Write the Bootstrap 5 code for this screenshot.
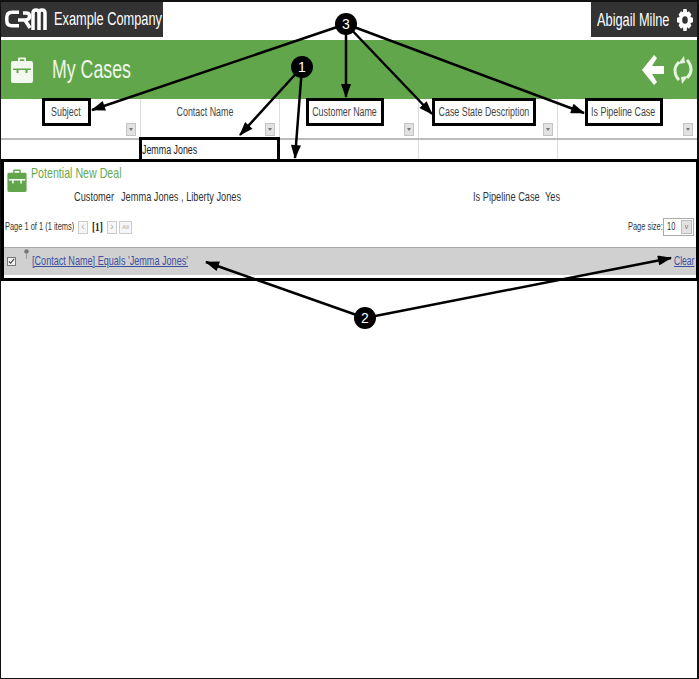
<!DOCTYPE html>
<html lang="en">
<head>
<meta charset="utf-8">
<title>My Cases</title>
<link href="https://cdn.jsdelivr.net/npm/bootstrap@5.3.0/dist/css/bootstrap.min.css" rel="stylesheet">
<style>
body{font-family:"Liberation Sans",Arial,sans-serif;font-size:12.5px;color:#333;background:#fff;margin:0;}
.pg{width:699px;height:679px;overflow:hidden;border:solid #111;border-width:2px 2px 1px 1px;}
.sx{display:inline-block;white-space:nowrap;transform:scaleX(.71);transform-origin:left center;}
.sx-c{display:inline-block;white-space:nowrap;transform:scaleX(.71);transform-origin:center center;}
.tb-dark{background:#333;color:#fff;height:35px;}
.tb-co{width:162px;font-size:18px;}
.tb-user{width:106px;font-size:18px;}
.hd-green{background:#62a64c;height:59px;margin-top:3px;color:#fff;}
.hd-title{font-size:25px;color:#eef7e8;margin-left:19px;width:78px;}
.ico-case{margin-left:10px;}
.ico-back{margin-right:9px;}
.ico-ref{margin-right:4px;}
.t-co{margin-left:7px;width:107px;}
.t-user{margin-left:6px;width:75px;margin-top:2px;}
.ico-gear{margin-left:5px;margin-top:1px;}
.grid-t{table-layout:fixed;width:696px;margin:0;border-collapse:collapse;}
.grid-t th,.grid-t td{border-right:1px solid #ddd;font-weight:400;padding:0;}
.grid-t th:last-child,.grid-t td:last-child{border-right:0;}
.grid-t th{height:40px;border-bottom:2px solid #bbb;text-align:center;vertical-align:top;padding:4px 9px 0 0;position:relative;color:#444;}
.grid-t td{height:21px;padding:1px 0 0 1px;color:#222;}
.flt{position:absolute;right:4px;top:24px;width:10px;height:13px;background:#e2e2e2;border:1px solid #c4c4c4;}
.flt::after{content:"";position:absolute;left:2px;top:4px;border:2px solid transparent;border-top:3px solid #777;}
.cs-head{height:29px;padding-left:6px;}
.ico-c2{margin-top:9px;}
.cs-name{color:#6aa84f;font-size:15px;line-height:17px;margin-top:4px;margin-left:4px;width:93px;}
.cs-row{height:16px;line-height:16px;font-size:13px;color:#333;}
.cs-left{width:472px;}
.lab-a{margin-left:73px;width:40px;}
.val-a{margin-left:7px;}
.lab-b{width:64px;}
.val-b{margin-left:8px;}
.pager{font-size:10.5px;height:18px;padding:0 3px 0 4px;margin-top:13px;color:#333;}
.pg-t{width:69px;}
.pbtn{width:10px;height:13px;border:1px solid #ccc;color:#aaa;font-size:10px;line-height:10px;text-align:center;background:#f6f6f6;margin-left:4px;}
.pbtn-w{width:13px;font-size:6px;line-height:11px;margin-left:2px;}
.pcur{font-family:"Liberation Serif",serif;font-weight:700;font-size:13px;color:#222;margin-left:4px;width:11px;}
.psz{width:32px;margin-left:auto;}
.pcombo{width:31px;height:18px;border:1px solid #aaa;padding-left:3px;background:#fff;margin-left:3px;}
.pcombo i{width:11px;height:14px;margin:1px;background:#e2e2e2;border:1px solid #bbb;color:#777;font-style:normal;font-size:7px;line-height:11px;text-align:center;}
.psz-n{width:10px;}
.fbar{background:#d0d0d0;border-top:1px solid #aaa;height:28px;margin-top:11px;padding:0 3px 0 6px;font-size:12.8px;}
.fbar a{color:#3d4f9f;margin-bottom:2px;}
.fchk{width:9px;height:9px;border:1px solid #777;background:#f0f0f0;}
.ico-f{margin-left:8px;margin-top:1px;}
.t-lnk{margin-left:3px;width:156px;}
.t-clr{margin-left:auto;width:20px;font-size:12px;}
.overlay{position:absolute;left:0;top:0;pointer-events:none;}
.ov-n{font-family:"Liberation Sans",sans-serif;font-size:14px;fill:#fff;text-anchor:middle;}
</style>
</head>
<body class="position-relative">
<div class="pg">
  <div class="d-flex justify-content-between">
    <div class="tb-dark tb-co d-flex align-items-center">
      <svg width="42" height="24" viewBox="0 0 42 24" class="ms-1 flex-shrink-0" aria-hidden="true"><g fill="none" stroke="#fff" stroke-width="3.500"><path d="M14 4.200H7Q1.800 4.200 1.800 9.500V12.500Q1.800 17.800 7 17.800H14"/><path d="M13 12H20Q24.500 12 24.500 8Q24.500 5 21 5H18M20 12L25 20"/><path d="M28 22V5Q28 2 31 2Q34 2 34 5V22M34 5Q34 2 37 2Q40 2 40 5V22"/></g></svg>
      <span class="sx t-co">Example Company</span>
    </div>
    <div class="tb-dark tb-user d-flex align-items-center">
      <span class="sx t-user">Abigail Milne</span>
      <svg class="ico-gear flex-shrink-0" width="16" height="22" viewBox="0 0 20 20" preserveAspectRatio="none" aria-hidden="true"><path fill="#fff" fill-rule="evenodd" d="M8 0h4l.6 3 2.400-1L18 5l-1.300 2.300L20 8v4l-3.300.7L18 15l-3 3-2.400-1.300L12 20H8l-.6-3.300L5 18l-3-3 1.300-2.300L0 12V8l3.300-.7L2 5l3-3 2.400 1zM10 6.500a3.500 3.500 0 100 7 3.500 3.500 0 000-7z"/></svg>
    </div>
  </div>
  <div class="hd-green d-flex align-items-center">
    <svg class="ico-case flex-shrink-0" width="22" height="26" viewBox="0 0 22 26" aria-hidden="true"><path fill="#f2f8ee" fill-rule="evenodd" d="M7 4V1.500Q7 .5 8 .5h6q1 0 1 1V4h-1.800V2.200H8.800V4zM2 4h18q2 0 2 2v18q0 2-2 2H2q-2 0-2-2V6q0-2 2-2zM2 11.500V13h3.500v3h2v-3h7v3h2v-3H20v-1.500z"/></svg>
    <span class="hd-title sx">My Cases</span>
    <div class="ms-auto d-flex align-items-center">
      <svg class="ico-back" width="22" height="30" viewBox="0 0 22 30" aria-hidden="true"><path fill="#fff" d="M12 0L0 15l12 15 3-3-5-8h12v-8H10l5-8z"/></svg>
      <svg class="ico-ref" width="20" height="28" viewBox="0 0 20 28" aria-hidden="true"><g fill="none" stroke="#e6f3df" stroke-width="3"><path d="M6 6Q2 10 2 14Q2 20 6 24"/><path d="M14 22Q18 18 18 14Q18 8 14 4"/></g><path fill="#e6f3df" d="M11 0l1 7-7 1zM9 28l-1-7 7-1z"/></svg>
    </div>
  </div>
  <table class="grid-t">
    <thead><tr>
      <th><span class="sx-c">Subject</span><span class="flt"></span></th>
      <th><span class="sx-c">Contact Name</span><span class="flt"></span></th>
      <th><span class="sx-c">Customer Name</span><span class="flt"></span></th>
      <th><span class="sx-c">Case State Description</span><span class="flt"></span></th>
      <th><span class="sx-c">Is Pipeline Case</span><span class="flt"></span></th>
    </tr></thead>
    <tbody><tr><td></td><td><span class="sx">Jemma Jones</span></td><td></td><td></td><td></td></tr></tbody>
  </table>
  <div class="cs-head d-flex">
    <svg class="ico-c2 flex-shrink-0" width="20" height="23" viewBox="0 0 20 24" aria-hidden="true"><path fill="#62a64c" fill-rule="evenodd" d="M6 4V1.500Q6 .5 7 .5h6q1 0 1 1V4h-1.500V2H7.500v2zM1.500 4h17q1.500 0 1.500 1.500v17q0 1.500-1.500 1.500h-17Q0 24 0 22.500v-17Q0 4 1.500 4zM1.500 10.500V12H5v3h1.500v-3h7v3H15v-3h3.500v-1.500z"/></svg>
    <span class="cs-name sx">Potential New Deal</span>
  </div>
  <div class="cs-row d-flex">
    <div class="cs-left d-flex"><span class="sx lab-a">Customer</span><span class="sx val-a">Jemma Jones , Liberty Jones</span></div>
    <div class="d-flex"><span class="sx lab-b">Is Pipeline Case</span><span class="sx val-b">Yes</span></div>
  </div>
  <div class="pager d-flex align-items-center">
    <span class="sx pg-t">Page 1 of 1 (1 items)</span>
    <span class="pbtn">‹</span>
    <span class="pcur sx">[1]</span>
    <span class="pbtn">›</span>
    <span class="pbtn pbtn-w">All</span>
    <span class="sx psz">Page size:</span>
    <span class="pcombo d-flex align-items-center justify-content-between"><span class="sx psz-n">10</span><i>v</i></span>
  </div>
  <div class="fbar d-flex align-items-center">
    <span class="fchk d-flex align-items-center justify-content-center flex-shrink-0"><svg width="7" height="7" viewBox="0 0 8 8" aria-hidden="true"><path d="M1 4l2 2 4-5" fill="none" stroke="#444" stroke-width="1.300"/></svg></span>
    <svg class="ico-f flex-shrink-0 align-self-start" width="5" height="10" viewBox="0 0 5 10" aria-hidden="true"><circle cx="2.500" cy="2.500" r="2.300" fill="#777"/><path stroke="#999" d="M2.500 4v6"/></svg>
    <a href="#" class="sx t-lnk">[Contact Name] Equals 'Jemma Jones'</a>
    <a href="#" class="sx t-clr">Clear</a>
  </div>
</div>
<svg class="overlay" width="699" height="679" viewBox="0 0 699 679" aria-hidden="true">
  <defs><marker id="ah" viewBox="0 0 14 10" refX="13" refY="5" markerWidth="15" markerHeight="10" markerUnits="userSpaceOnUse" orient="auto"><path d="M0 0L14 5L0 10z" fill="#000"/></marker></defs>
  <g fill="none" stroke="#000" stroke-width="3">
    <rect x="43.500" y="99.500" width="46" height="25"/>
    <rect x="307.500" y="99.500" width="75" height="25"/>
    <rect x="433.500" y="99.500" width="101" height="25"/>
    <rect x="586.500" y="99.500" width="75" height="25"/>
    <path d="M140.500 160V138.500H278.500V160"/>
    <rect x="2.500" y="160.500" width="695" height="119"/>
  </g>
  <g stroke="#000" stroke-width="2.500" marker-end="url(#ah)">
    <line x1="346" y1="24" x2="92" y2="110"/>
    <line x1="346" y1="24" x2="346" y2="97"/>
    <line x1="346" y1="24" x2="432" y2="114"/>
    <line x1="346" y1="24" x2="584" y2="113"/>
    <line x1="302" y1="67" x2="240" y2="135"/>
    <line x1="302" y1="67" x2="295" y2="158"/>
    <line x1="365" y1="318" x2="206" y2="262"/>
    <line x1="365" y1="318" x2="671" y2="258"/>
  </g>
  <circle cx="346" cy="24" r="11" fill="#000"/>
  <circle cx="302" cy="67" r="11" fill="#000"/>
  <circle cx="365" cy="318" r="11" fill="#000"/>
  <text class="ov-n" x="346" y="29">3</text>
  <text class="ov-n" x="302" y="72">1</text>
  <text class="ov-n" x="365" y="323">2</text>
</svg>
<script src="https://cdn.jsdelivr.net/npm/bootstrap@5.3.0/dist/js/bootstrap.bundle.min.js"></script>
</body>
</html>
